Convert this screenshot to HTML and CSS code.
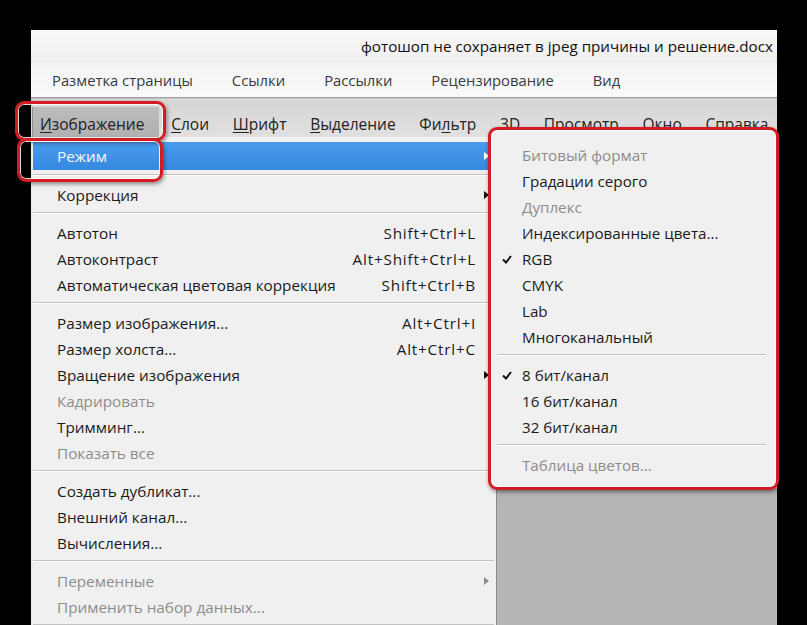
FILE: index.html
```html
<!DOCTYPE html>
<html lang="ru">
<head>
<meta charset="utf-8">
<title>Photoshop — Изображение / Режим</title>
<link rel="stylesheet" href="styles.css">
</head>
<body>
<div class="window">
  <div class="titlebar"><span class="title">фотошоп не сохраняет в jpeg причины и решение.docx</span></div>
  <div class="ribbon">
    <span>Разметка страницы</span>
    <span>Ссылки</span>
    <span>Рассылки</span>
    <span>Рецензирование</span>
    <span>Вид</span>
  </div>
  <div class="rsep"></div>
  <div class="menubar">
    <span class="mi active"><u>И</u>зображение</span>
    <span class="mi"><u>С</u>лои</span>
    <span class="mi"><u>Ш</u>рифт</span>
    <span class="mi"><u>В</u>ыделение</span>
    <span class="mi">Фи<u>л</u>ьтр</span>
    <span class="mi">3D</span>
    <span class="mi">Просмотр</span>
    <span class="mi">Окно</span>
    <span class="mi">Справка</span>
  </div>
  <div class="content">
    <div class="dropdown">
      <div class="row hl"><span class="lbl">Режим</span><svg class="arrow" viewBox="0 0 5 8" width="5" height="8"><polygon points="0,0 5,4 0,8"/></svg></div>
      <div class="sep"></div>
      <div class="row"><span class="lbl">Коррекция</span><svg class="arrow" viewBox="0 0 5 8" width="5" height="8"><polygon points="0,0 5,4 0,8"/></svg></div>
      <div class="sep"></div>
      <div class="row"><span class="lbl">Автотон</span><span class="key">Shift+Ctrl+L</span></div>
      <div class="row"><span class="lbl">Автоконтраст</span><span class="key">Alt+Shift+Ctrl+L</span></div>
      <div class="row"><span class="lbl">Автоматическая цветовая коррекция</span><span class="key">Shift+Ctrl+B</span></div>
      <div class="sep"></div>
      <div class="row"><span class="lbl">Размер изображения...</span><span class="key">Alt+Ctrl+I</span></div>
      <div class="row"><span class="lbl">Размер холста...</span><span class="key">Alt+Ctrl+C</span></div>
      <div class="row"><span class="lbl">Вращение изображения</span><svg class="arrow" viewBox="0 0 5 8" width="5" height="8"><polygon points="0,0 5,4 0,8"/></svg></div>
      <div class="row dis"><span class="lbl">Кадрировать</span></div>
      <div class="row"><span class="lbl">Тримминг...</span></div>
      <div class="row dis"><span class="lbl">Показать все</span></div>
      <div class="sep"></div>
      <div class="row"><span class="lbl">Создать дубликат...</span></div>
      <div class="row"><span class="lbl">Внешний канал...</span></div>
      <div class="row"><span class="lbl">Вычисления...</span></div>
      <div class="sep"></div>
      <div class="row dis"><span class="lbl">Переменные</span><svg class="arrow" viewBox="0 0 5 8" width="5" height="8"><polygon points="0,0 5,4 0,8"/></svg></div>
      <div class="row dis"><span class="lbl">Применить набор данных...</span></div>
      <div class="sep"></div>
    </div>
    <div class="canvas"></div>
  </div>

  <div class="submenu">
    <div class="srow dis">Битовый формат</div>
    <div class="srow">Градации серого</div>
    <div class="srow dis">Дуплекс</div>
    <div class="srow">Индексированные цвета...</div>
    <div class="srow"><svg class="check" viewBox="0 0 10 9" width="10" height="9"><path d="M1 4.5 L4 7.5 L9 1"/></svg>RGB</div>
    <div class="srow">CMYK</div>
    <div class="srow">Lab</div>
    <div class="srow">Многоканальный</div>
    <div class="ssep"></div>
    <div class="srow"><svg class="check" viewBox="0 0 10 9" width="10" height="9"><path d="M1 4.5 L4 7.5 L9 1"/></svg>8 бит/канал</div>
    <div class="srow">16 бит/канал</div>
    <div class="srow">32 бит/канал</div>
    <div class="ssep"></div>
    <div class="srow dis">Таблица цветов...</div>
  </div>

  <div class="mark mark-menu"></div>
  <div class="mark mark-mode"></div>
  <div class="mark mark-sub"></div>
</div>
</body>
</html>
```

FILE: styles.css
```css
html, body {
  margin: 0;
  padding: 0;
}
body {
  background: #000;
  width: 807px;
  height: 625px;
  overflow: hidden;
  font-family: "Open Sans", "Noto Sans", "DejaVu Sans", sans-serif;
}
.window {
  position: relative;
  margin: 30px 0 0 31px;
  width: 746px;
  height: 595px;
  background: #f0f0f0;
}
.titlebar {
  height: 33px;
  background: linear-gradient(#f7f7f7, #efefef);
  font-size: 15.2px;
  line-height: 33px;
  padding-left: 330px;
  white-space: nowrap;
  overflow: hidden;
  color: #111;
}
.ribbon {
  height: 34px;
  display: flex;
  gap: 39px;
  padding-left: 21px;
  font-size: 14.8px;
  line-height: 34px;
  color: #3a3a3a;
  background: linear-gradient(#f3f3f3, #fafafa);
  white-space: nowrap;
}
.rsep {
  height: 1px;
  background: #9c9c9c;
  border-bottom: 1px solid #c9c9c9;
}
.menubar {
  height: 39px;
  box-sizing: border-box;
  padding: 8px 0 0 2px;
  display: flex;
  background: linear-gradient(#d6d6d6, #e0e0e0);
  border-bottom: 1px solid #f4f4f4;
  font-size: 15.5px;
  color: #222;
  white-space: nowrap;
}
.mi {
  height: 31px;
  line-height: 34px;
  padding: 0 11.85px;
}
.mi u {
  text-decoration-thickness: 1px;
  text-underline-offset: 2px;
}
.mi.active {
  padding: 0 15px 0 7px;
  background: linear-gradient(#bcbcbc, #b0b0b0);
  border-left: 1px solid #8e8e8e;
  margin-left: -1px;
}
.content {
  display: flex;
  height: 487px;
}
.dropdown {
  width: 466px;
  box-sizing: border-box;
  border-right: 1px solid #8a8a8a;
  background: #f0f0f0;
  padding-top: 4px;
  font-size: 15.3px;
  color: #1a1a1a;
}
.row {
  position: relative;
  height: 26px;
  display: flex;
  align-items: center;
  justify-content: space-between;
  margin: 0 7px 0 2px;
  padding: 0 13px 0 24px;
  white-space: nowrap;
}
.key {
  letter-spacing: 0.8px;
}
.row.hl {
  height: 28px;
  background: linear-gradient(#4a9bec, #3489e0);
  color: #f6f9ff;
}
.row.dis {
  color: #8c8c8c;
}
.arrow {
  position: absolute;
  right: 0;
  top: 50%;
  margin-top: -4px;
  fill: #111;
}
.row.hl .arrow {
  fill: #fff;
}
.row.dis .arrow {
  fill: #8c8c8c;
}
.sep {
  height: 12px;
  position: relative;
  margin: 0 2px;
}
.sep::before {
  content: "";
  position: absolute;
  left: 0;
  right: 0;
  top: 4px;
  height: 1px;
  background: #c2c2c2;
  border-bottom: 1px solid #fdfdfd;
}
.canvas {
  flex: 1;
  background: #b6b6b6;
}
.submenu {
  position: absolute;
  left: 460px;
  top: 100px;
  width: 286px;
  height: 358px;
  box-sizing: border-box;
  padding-top: 12px;
  background: #f0f0f0;
  font-size: 15.2px;
  color: #1a1a1a;
}
.srow {
  position: relative;
  height: 26px;
  line-height: 26px;
  padding-left: 31px;
  white-space: nowrap;
}
.srow.dis {
  color: #8c8c8c;
}
.check {
  position: absolute;
  left: 11px;
  top: 9px;
  fill: none;
  stroke: #111;
  stroke-width: 2;
}
.ssep {
  height: 12px;
  position: relative;
}
.ssep::before {
  content: "";
  position: absolute;
  left: 6px;
  right: 11px;
  top: 4px;
  height: 1px;
  background: #c2c2c2;
  border-bottom: 1px solid #fdfdfd;
}
.mark {
  position: absolute;
  box-sizing: border-box;
  border: 3.5px solid #d41b23;
  border-radius: 9px;
  box-shadow: inset 0 0 0 1px rgba(255,255,255,0.85), 1px 2px 4px rgba(0,0,0,0.45);
}
.mark-menu {
  left: -16px;
  top: 71px;
  width: 151px;
  height: 40px;
}
.mark-mode {
  left: -14px;
  top: 108px;
  width: 146px;
  height: 44px;
}
.mark-sub {
  left: 457px;
  top: 97px;
  width: 291px;
  height: 363px;
}
```
